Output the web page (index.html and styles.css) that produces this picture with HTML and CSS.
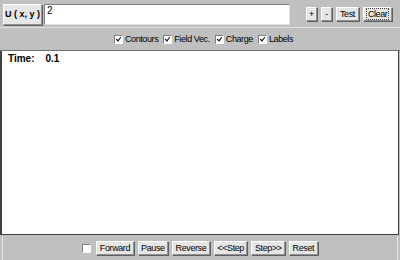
FILE: index.html
```html
<!DOCTYPE html>
<html lang="en">
<head>
    <meta charset="UTF-8">
    <title>Potential Field</title>
    <link rel="stylesheet" href="styles.css">
</head>
<body>
    <div class="applet">
        <!-- function input row -->
        <div class="top-bar">
            <button class="btn func-btn">U ( x, y )</button>
            <div class="func-field">2</div>
            <div class="tools">
                <button class="btn small-btn">+</button>
                <button class="btn small-btn">-</button>
                <button class="btn">Test</button>
                <button class="btn focused"><span>Clear</span></button>
            </div>
        </div>

        <!-- display options -->
        <div class="options">
            <label class="check"><span class="box on"></span>Contours</label>
            <label class="check"><span class="box on"></span>Field Vec.</label>
            <label class="check"><span class="box on"></span>Charge</label>
            <label class="check"><span class="box on"></span>Labels</label>
        </div>

        <!-- drawing area -->
        <div class="canvas">
            <div class="time"><span>Time:</span><span>0.1</span></div>
        </div>

        <!-- animation controls -->
        <div class="controls">
            <span class="box"></span>
            <button class="btn">Forward</button>
            <button class="btn">Pause</button>
            <button class="btn">Reverse</button>
            <button class="btn">&lt;&lt;Step</button>
            <button class="btn">Step&gt;&gt;</button>
            <button class="btn">Reset</button>
        </div>
    </div>
</body>
</html>
```

FILE: styles.css
```css
body {
    margin: 0;
    padding: 0;
    background: #c0c0c0;
    font-family: "Liberation Sans", Arial, sans-serif;
    font-size: 9px;
    letter-spacing: -0.4px;
    color: #000;
}

.applet {
    width: 400px;
    height: 260px;
    display: flex;
    flex-direction: column;
    background: #c0c0c0;
}

.btn {
    font-family: "Liberation Sans", Arial, sans-serif;
    font-size: 9px;
    letter-spacing: -0.4px;
    color: #000;
    background: #e6e6e6;
    border: 1px solid;
    border-color: #fff #909090 #909090 #fff;
    box-shadow: 1px 1px 0 #606060;
    padding: 0 3px;
    height: 14px;
    line-height: 12px;
    margin: 0;
    white-space: nowrap;
}

.focused span {
    outline: 1px dotted #404040;
    padding: 0 1px;
}

/* top row */
.top-bar {
    display: flex;
    align-items: center;
    height: 26px;
    padding: 1px 0 0 3px;
    border-bottom: 1px solid #e0e0e0;
}

.func-btn {
    font-weight: bold;
    letter-spacing: 0;
    height: 21px;
    width: 39px;
    padding: 0;
}

.func-field {
    margin-left: 2px;
    width: 246px;
    height: 21px;
    box-sizing: border-box;
    background: #fff;
    border: 1px solid;
    border-color: #808080 #e0e0e0 #e0e0e0 #808080;
    padding: 0 2px;
    font-size: 10px;
    letter-spacing: 0;
    line-height: 12px;
}

.tools {
    display: flex;
    gap: 4px;
    margin-left: 16px;
}

.small-btn {
    width: 11px;
    padding: 0;
}

/* checkbox row */
.options {
    display: flex;
    justify-content: center;
    align-items: center;
    gap: 5px;
    height: 22px;
    padding-left: 7px;
    border-bottom: 1px solid #707070;
}

.check {
    display: flex;
    align-items: center;
    gap: 2px;
}

.box {
    display: inline-block;
    box-sizing: border-box;
    width: 9px;
    height: 9px;
    background: #fff;
    border: 1px solid;
    border-color: #808080 #fff #fff #808080;
    position: relative;
}

.box.on::after {
    content: "";
    position: absolute;
    left: 2px;
    top: 0;
    width: 2px;
    height: 4px;
    border: solid #000;
    border-width: 0 1.5px 1.5px 0;
    transform: rotate(40deg);
}

/* drawing area */
.canvas {
    flex: 1;
    background: #fff;
    border: 1px solid #404040;
    border-top: none;
    border-left-width: 2px;
    margin-right: 1px;
}

.time {
    display: flex;
    gap: 11px;
    font-size: 10px;
    letter-spacing: 0;
    font-weight: bold;
    padding: 2px 0 0 6px;
}

/* bottom row */
.controls {
    display: flex;
    justify-content: center;
    align-items: center;
    gap: 4px;
    height: 24px;
    margin: 1px 2px 0 2px;
    border-left: 1px solid #e8e8e8;
    border-right: 1px solid #e8e8e8;
}

.controls .btn {
    padding: 0 2.5px;
}

.controls .box {
    margin-right: 1px;
}
```
